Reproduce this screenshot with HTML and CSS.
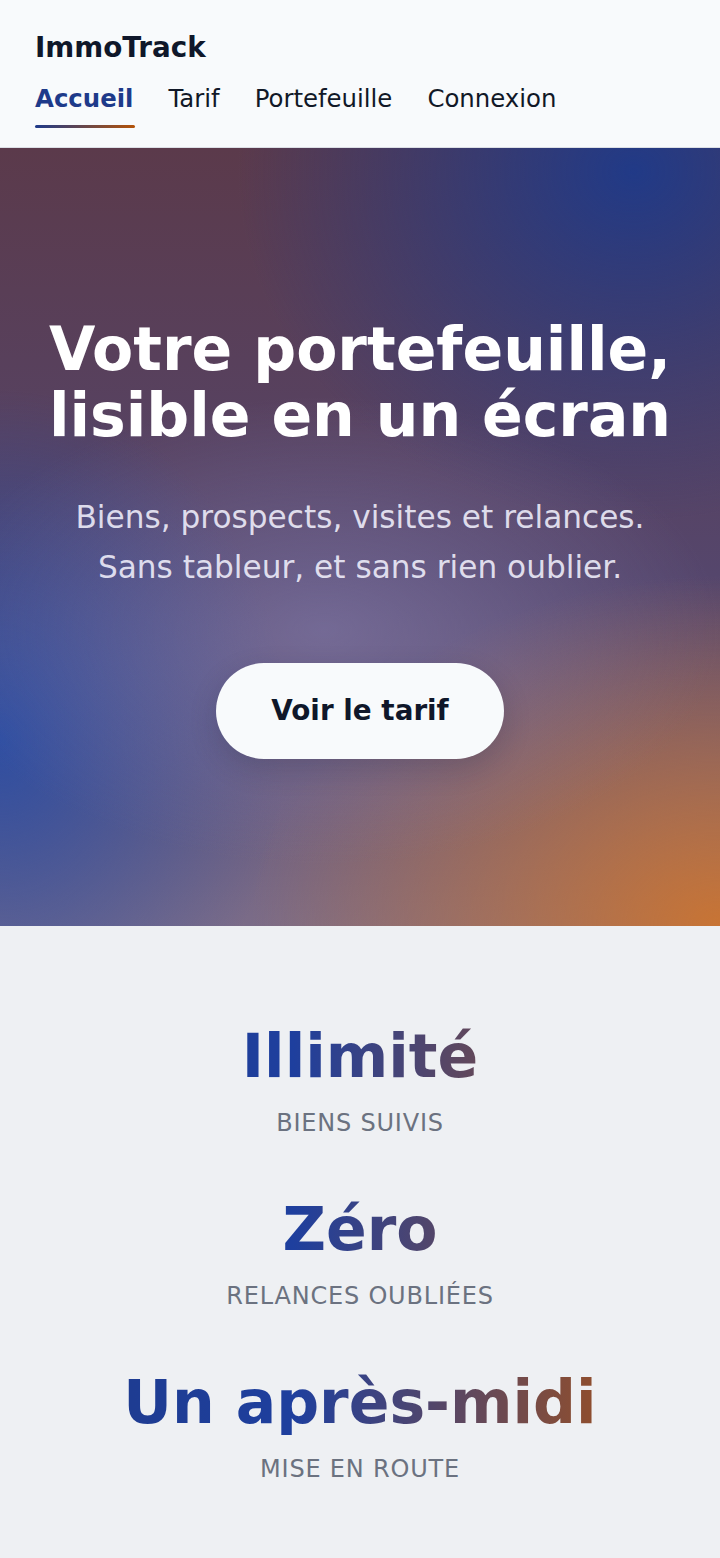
FILE: index.html
```html
<!DOCTYPE html>
<html lang="fr">
<head>
  <meta charset="UTF-8">
  <title>ImmoTrack</title>
  <link rel="stylesheet" href="styles.css">
</head>
<body>

  <header class="topbar">
    <div class="logo">ImmoTrack</div>
    <nav class="nav">
      <a href="#" class="active">Accueil</a>
      <a href="#">Tarif</a>
      <a href="#">Portefeuille</a>
      <a href="#">Connexion</a>
    </nav>
  </header>

  <section class="hero">
    <h1>Votre portefeuille, lisible en un écran</h1>
    <p>Biens, prospects, visites et relances.<br>Sans tableur, et sans rien oublier.</p>
    <a href="#" class="btn">Voir le tarif</a>
  </section>

  <section class="stats">
    <div class="stat">
      <div class="value">Illimité</div>
      <div class="label">Biens suivis</div>
    </div>
    <div class="stat">
      <div class="value">Zéro</div>
      <div class="label">Relances oubliées</div>
    </div>
    <div class="stat">
      <div class="value">Un après-midi</div>
      <div class="label">Mise en route</div>
    </div>
  </section>

</body>
</html>
```

FILE: styles.css
```css
body { margin: 0; font-family: "DejaVu Sans", sans-serif; color: #0f172a; background: #eef0f3; }
a { text-decoration: none; color: inherit; }

.topbar { background: #f8fafc; padding: 31px 35px 19px; border-bottom: 1px solid #dcdfe5; }
.logo { font-size: 27.8px; font-weight: bold; line-height: 1.2; }
.nav { display: flex; gap: 35px; margin-top: 20px; font-size: 24.4px; line-height: 1.2; }
.nav a { padding-bottom: 14px; position: relative; color: #111827; }
.nav a.active { color: #1e3a8a; font-weight: bold; }
.nav a.active::after { content: ""; position: absolute; left: 0; right: -2px; bottom: 0; height: 3px; border-radius: 2px; background: linear-gradient(90deg, #1e3a8a, #b45309); }

.hero {
  padding: 168px 36px 167px;
  text-align: center;
  color: #fff;
  background:
    radial-gradient(ellipse 55% 30% at 45% 62%, rgba(140,135,185,0.5) 0, rgba(140,135,185,0) 100%),
    radial-gradient(ellipse 55% 45% at 88% 3%, rgba(30,58,138,0.95), rgba(30,58,138,0) 100%),
    radial-gradient(ellipse 40% 45% at 0% 76%, rgba(44,78,164,0.95), rgba(44,78,164,0) 100%),
    radial-gradient(ellipse 65% 45% at 100% 100%, rgba(200,116,52,1), rgba(200,116,52,0) 100%),
    linear-gradient(180deg, #5b3a4b 0%, #55466c 55%, #7b6c88 100%);
}
.hero h1 { margin: 0; font-size: 60px; line-height: 1.1; font-weight: bold; }
.hero p { margin: 45px 0 71px; font-size: 31.2px; line-height: 1.6; color: rgba(241,240,252,0.88); }
.btn { display: inline-block; background: #f8fafc; color: #0f172a; font-size: 27.8px; font-weight: bold; line-height: 32px; padding: 32px 55px; border-radius: 999px; box-shadow: 0 10px 28px rgba(15,23,42,0.18); }

.stats { padding: 97px 24px 96px; text-align: center; }
.stat + .stat { margin-top: 55px; }
.value { font-size: 60px; font-weight: bold; line-height: 1.1; background: linear-gradient(90deg, #1e3a8a 0%, #1e3f9e 40%, #b45309 100%); -webkit-background-clip: text; background-clip: text; color: transparent; }
.label { margin-top: 18px; font-size: 24px; line-height: 1.4; letter-spacing: 0.8px; text-transform: uppercase; color: #6b7280; }
```
